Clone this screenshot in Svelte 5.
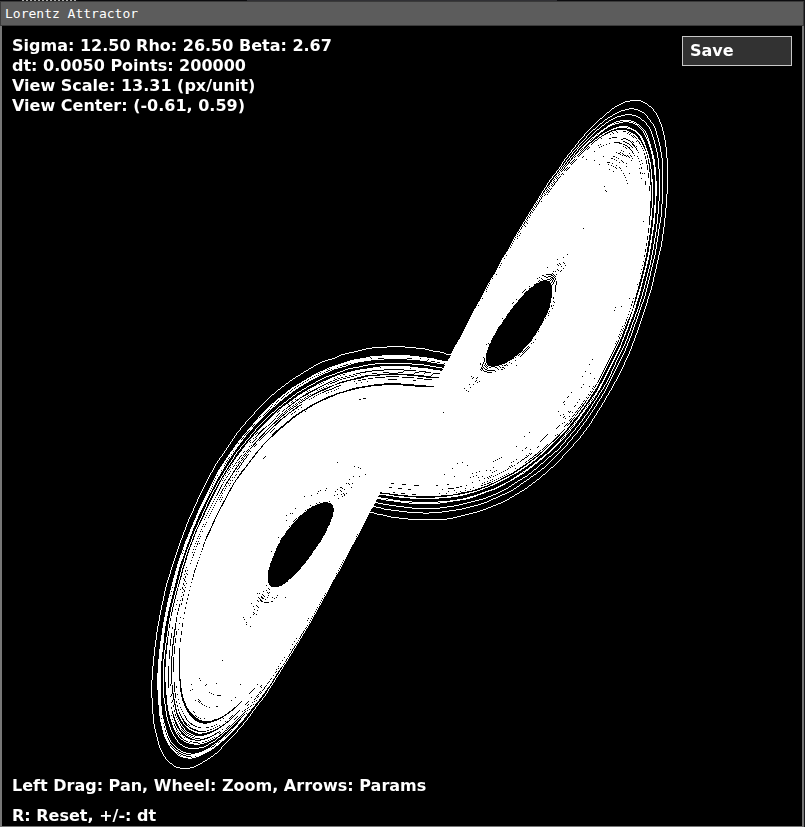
<script>
  import { onMount } from 'svelte';

  const POINTS = 200000;
  const WARMUP = 1000;
  const defaults = { sigma: 12.5, rho: 26.5, beta: 8 / 3, dt: 0.005, scale: 13.31, cx: -0.61, cy: 0.59 };

  let p = $state({ ...defaults });
  let canvas;
  let width = $state(0);
  let height = $state(0);
  let mounted = $state(false);
  let drag = null;

  const trail = $derived(integrate(p.sigma, p.rho, p.beta, p.dt));

  // Fourth-order Runge-Kutta over the Lorenz equations, keeping x and y only.
  function integrate(s, r, b, dt) {
    const out = new Float64Array(POINTS * 2);
    const f = (q) => [s * (q[1] - q[0]), q[0] * (r - q[2]) - q[1], q[0] * q[1] - b * q[2]];
    const add = (q, k, h) => [q[0] + k[0] * h, q[1] + k[1] * h, q[2] + k[2] * h];
    let q = [0.1, 0, 0];
    for (let i = 0; i < POINTS; i++) {
      const k1 = f(q);
      const k2 = f(add(q, k1, dt / 2));
      const k3 = f(add(q, k2, dt / 2));
      const k4 = f(add(q, k3, dt));
      q = q.map((v, n) => v + dt / 6 * (k1[n] + 2 * k2[n] + 2 * k3[n] + k4[n]));
      out[2 * i] = q[0];
      out[2 * i + 1] = q[1];
    }
    return out;
  }

  function draw(points, w, h, scale, cx, cy) {
    canvas.width = w;
    canvas.height = h;
    const ctx = canvas.getContext('2d');
    const image = ctx.createImageData(w, h);
    const pixels = new Uint32Array(image.data.buffer).fill(0xff000000);
    let px, py;
    for (let i = WARMUP; i < POINTS; i++) {
      const x = Math.trunc(w / 2 + (points[2 * i] - cx) * scale);
      const y = Math.trunc(h / 2 - (points[2 * i + 1] - cy) * scale);
      if (i > WARMUP) line(pixels, w, h, px, py, x, y);
      px = x;
      py = y;
    }
    ctx.putImageData(image, 0, 0);
  }

  function line(pixels, w, h, x0, y0, x1, y1) {
    const dx = Math.abs(x1 - x0), dy = -Math.abs(y1 - y0);
    const sx = x0 < x1 ? 1 : -1, sy = y0 < y1 ? 1 : -1;
    let err = dx + dy;
    for (;;) {
      if (x0 >= 0 && x0 < w && y0 >= 0 && y0 < h) pixels[y0 * w + x0] = 0xffffffff;
      if (x0 === x1 && y0 === y1) return;
      const e2 = 2 * err;
      if (e2 >= dy) { err += dy; x0 += sx; }
      if (e2 <= dx) { err += dx; y0 += sy; }
    }
  }

  onMount(() => { mounted = true; });

  $effect(() => {
    if (mounted && width && height) draw(trail, width, height, p.scale, p.cx, p.cy);
  });

  function keydown(e) {
    if (e.key === 'ArrowUp') p.rho += 0.5;
    else if (e.key === 'ArrowDown') p.rho -= 0.5;
    else if (e.key === 'ArrowRight') p.sigma += 0.5;
    else if (e.key === 'ArrowLeft') p.sigma -= 0.5;
    else if (e.key === '+') p.dt += 0.0005;
    else if (e.key === '-') p.dt = Math.max(0.0005, p.dt - 0.0005);
    else if (e.key === 'r' || e.key === 'R') p = { ...defaults };
  }

  function move(e) {
    if (!drag) return;
    p.cx -= (e.clientX - drag.x) / p.scale;
    p.cy += (e.clientY - drag.y) / p.scale;
    drag = { x: e.clientX, y: e.clientY };
  }

  function wheel(e) {
    e.preventDefault();
    p.scale *= e.deltaY < 0 ? 1.1 : 1 / 1.1;
  }

  function save() {
    const a = document.createElement('a');
    a.download = 'lorenz.png';
    a.href = canvas.toDataURL();
    a.click();
  }
</script>

<svelte:window onkeydown={keydown} onmousemove={move} onmouseup={() => (drag = null)} />

<div class="desktop">
  <div class="behind"></div>
  <main class="window">
    <header>Lorentz Attractor</header>
    <div class="view" bind:clientWidth={width} bind:clientHeight={height}>
      <canvas
        bind:this={canvas}
        onmousedown={(e) => (drag = { x: e.clientX, y: e.clientY })}
        onwheel={wheel}
      ></canvas>
      <div class="overlay">
        <div class="top">
          <div class="stats">
            <div>Sigma: {p.sigma.toFixed(2)} Rho: {p.rho.toFixed(2)} Beta: {p.beta.toFixed(2)}</div>
            <div>dt: {p.dt.toFixed(4)} Points: {POINTS}</div>
            <div>View Scale: {p.scale.toFixed(2)} (px/unit)</div>
            <div>View Center: ({p.cx.toFixed(2)}, {p.cy.toFixed(2)})</div>
          </div>
          <button type="button" onclick={save}>Save</button>
        </div>
        <div class="help">
          <div>Left Drag: Pan, Wheel: Zoom, Arrows: Params</div>
          <div>R: Reset, +/-: dt</div>
        </div>
      </div>
    </div>
  </main>
</div>

<style>
  :global(body) { background: #111; overflow: hidden; }
  .desktop {
    display: flex;
    flex-direction: column;
    height: 100vh;
    padding-right: 1px;
    box-sizing: border-box;
    background: #151518;
  }
  .behind {
    height: 1px;
    background:
      repeating-linear-gradient(90deg, #aaa 0 2px, #111 2px 4px) 22px 0 / 54px 1px no-repeat,
      linear-gradient(#303034, #303034) 247px 0 / 310px 1px no-repeat,
      #0b0b0e;
  }
  .window {
    flex: 1;
    min-height: 0;
    display: flex;
    flex-direction: column;
  }
  header {
    height: 25px;
    box-sizing: border-box;
    padding-left: 4px;
    border: 1px solid #3a3a3a;
    background: #5c5c5c;
    color: #fff;
    font: 13px/23px "DejaVu Sans Mono", monospace;
  }
  .view {
    flex: 1;
    min-height: 0;
    position: relative;
    border: solid #777;
    border-width: 0 2px 1px;
    background: #000;
  }
  canvas {
    position: absolute;
    inset: 0;
    display: block;
  }
  .overlay {
    position: absolute;
    inset: 0;
    padding: 10px 10px 0;
    display: flex;
    flex-direction: column;
    justify-content: space-between;
    box-sizing: border-box;
    pointer-events: none;
    color: #fff;
    font: bold 16px/20px "DejaVu Sans", sans-serif;
  }
  .top {
    display: flex;
    justify-content: space-between;
    align-items: flex-start;
  }
  .help { line-height: 30px; margin-bottom: -5px; }
  button {
    width: 110px;
    height: 30px;
    padding: 0 7px;
    border: 1px solid #c8c8c8;
    background: #323232;
    color: #fff;
    font: inherit;
    text-align: left;
    pointer-events: auto;
  }
</style>
